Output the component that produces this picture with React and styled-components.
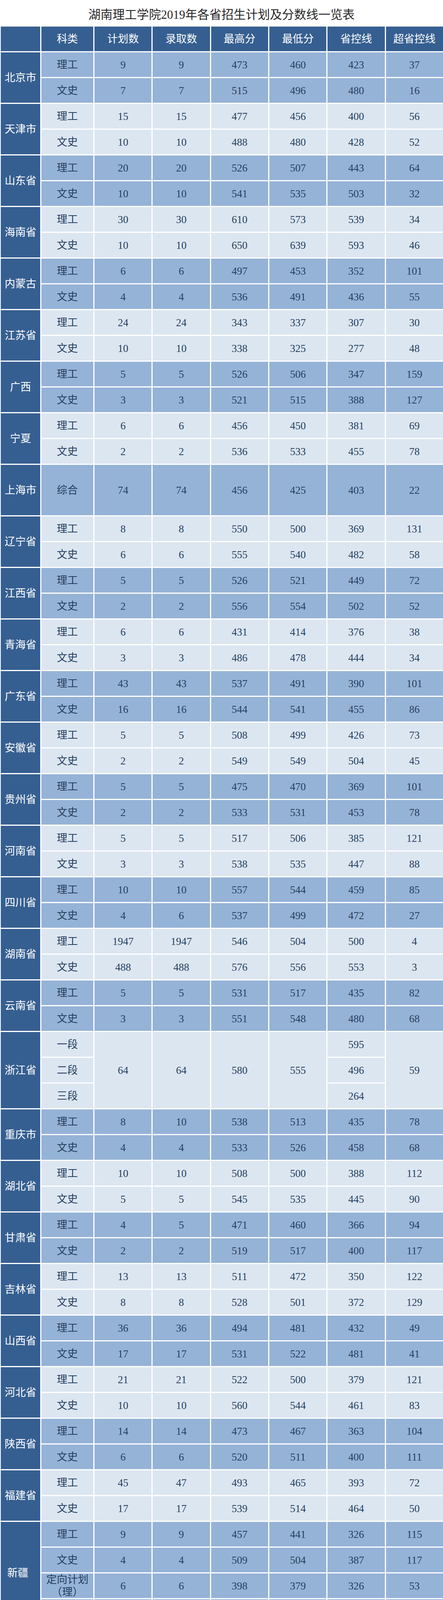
import React from 'react';
import styled, { createGlobalStyle } from 'styled-components';

const GlobalStyle = createGlobalStyle`
  html, body {
    margin: 0;
    padding: 0;
    background: #ffffff;
  }
  body {
    font-family: 'Liberation Serif', 'Noto Sans CJK SC', serif;
  }
`;

const Page = styled.div`
  width: 1135px;
  display: flex;
  flex-direction: column;
`;

const TitleBar = styled.div`
  height: 68px;
  display: flex;
  align-items: center;
  justify-content: center;
`;

const Title = styled.h1`
  margin: 0;
  font-size: 31px;
  font-weight: normal;
  color: #262626;
  font-family: 'Liberation Serif', 'Noto Sans CJK SC', serif;
`;

const Grid = styled.div`
  display: grid;
  grid-template-columns: 101px 133px repeat(6, minmax(0, 1fr));
  grid-auto-rows: 63px;
  gap: 3px;
  padding-left: 2px;
`;

const tones = {
  head: '#365f91',
  blue: '#95b3d7',
  pale: '#dce6f1',
};

const Cell = styled.div`
  grid-row: span ${(p) => p.$span || 1};
  background: ${(p) => tones[p.$tone]};
  color: ${(p) => (p.$tone === 'head' ? '#ffffff' : '#243f60')};
  display: flex;
  align-items: center;
  justify-content: center;
  text-align: center;
  font-size: ${(p) => p.$size || 27}px;
  line-height: ${(p) => (p.$multi ? '32px' : '1.25')};
  white-space: nowrap;
  overflow: hidden;
  padding-right: ${(p) => p.$shift || 0}px;
  padding-top: ${(p) => (p.$multi ? 0 : 3)}px;
  box-sizing: border-box;
`;

const headers = ['', '科类', '计划数', '录取数', '最高分', '最低分', '省控线', '超省控线'];

// each row: [科类, 计划数, 录取数, 最高分, 最低分, 省控线, 超省控线]
const groups = [
  { name: '北京市', rows: [['理工', 9, 9, 473, 460, 423, 37], ['文史', 7, 7, 515, 496, 480, 16]] },
  { name: '天津市', rows: [['理工', 15, 15, 477, 456, 400, 56], ['文史', 10, 10, 488, 480, 428, 52]] },
  { name: '山东省', rows: [['理工', 20, 20, 526, 507, 443, 64], ['文史', 10, 10, 541, 535, 503, 32]] },
  { name: '海南省', rows: [['理工', 30, 30, 610, 573, 539, 34], ['文史', 10, 10, 650, 639, 593, 46]] },
  { name: '内蒙古', rows: [['理工', 6, 6, 497, 453, 352, 101], ['文史', 4, 4, 536, 491, 436, 55]] },
  { name: '江苏省', rows: [['理工', 24, 24, 343, 337, 307, 30], ['文史', 10, 10, 338, 325, 277, 48]] },
  { name: '广西', rows: [['理工', 5, 5, 526, 506, 347, 159], ['文史', 3, 3, 521, 515, 388, 127]] },
  { name: '宁夏', rows: [['理工', 6, 6, 456, 450, 381, 69], ['文史', 2, 2, 536, 533, 455, 78]] },
  { name: '上海市', span: 2, rows: [['综合', 74, 74, 456, 425, 403, 22].map((v) => ({ v, span: 2 }))] },
  { name: '辽宁省', rows: [['理工', 8, 8, 550, 500, 369, 131], ['文史', 6, 6, 555, 540, 482, 58]] },
  { name: '江西省', rows: [['理工', 5, 5, 526, 521, 449, 72], ['文史', 2, 2, 556, 554, 502, 52]] },
  { name: '青海省', rows: [['理工', 6, 6, 431, 414, 376, 38], ['文史', 3, 3, 486, 478, 444, 34]] },
  { name: '广东省', rows: [['理工', 43, 43, 537, 491, 390, 101], ['文史', 16, 16, 544, 541, 455, 86]] },
  { name: '安徽省', rows: [['理工', 5, 5, 508, 499, 426, 73], ['文史', 2, 2, 549, 549, 504, 45]] },
  { name: '贵州省', rows: [['理工', 5, 5, 475, 470, 369, 101], ['文史', 2, 2, 533, 531, 453, 78]] },
  { name: '河南省', rows: [['理工', 5, 5, 517, 506, 385, 121], ['文史', 3, 3, 538, 535, 447, 88]] },
  { name: '四川省', rows: [['理工', 10, 10, 557, 544, 459, 85], ['文史', 4, 6, 537, 499, 472, 27]] },
  { name: '湖南省', rows: [['理工', 1947, 1947, 546, 504, 500, 4], ['文史', 488, 488, 576, 556, 553, 3]] },
  { name: '云南省', rows: [['理工', 5, 5, 531, 517, 435, 82], ['文史', 3, 3, 551, 548, 480, 68]] },
  {
    name: '浙江省',
    rows: [
      ['一段', { v: 64, span: 3 }, { v: 64, span: 3 }, { v: 580, span: 3 }, { v: 555, span: 3 }, 595, { v: 59, span: 3 }],
      ['二段', 496],
      ['三段', 264],
    ],
  },
  { name: '重庆市', rows: [['理工', 8, 10, 538, 513, 435, 78], ['文史', 4, 4, 533, 526, 458, 68]] },
  { name: '湖北省', rows: [['理工', 10, 10, 508, 500, 388, 112], ['文史', 5, 5, 545, 535, 445, 90]] },
  { name: '甘肃省', rows: [['理工', 4, 5, 471, 460, 366, 94], ['文史', 2, 2, 519, 517, 400, 117]] },
  { name: '吉林省', rows: [['理工', 13, 13, 511, 472, 350, 122], ['文史', 8, 8, 528, 501, 372, 129]] },
  { name: '山西省', rows: [['理工', 36, 36, 494, 481, 432, 49], ['文史', 17, 17, 531, 522, 481, 41]] },
  { name: '河北省', rows: [['理工', 21, 21, 522, 500, 379, 121], ['文史', 10, 10, 560, 544, 461, 83]] },
  { name: '陕西省', rows: [['理工', 14, 14, 473, 467, 363, 104], ['文史', 6, 6, 520, 511, 400, 111]] },
  { name: '福建省', rows: [['理工', 45, 47, 493, 465, 393, 72], ['文史', 17, 17, 539, 514, 464, 50]] },
  {
    name: '新疆',
    shift: 14,
    rows: [
      ['理工', 9, 9, 457, 441, 326, 115],
      ['文史', 4, 4, 509, 504, 387, 117],
      [{ v: '定向计划|（理）', multi: true }, 6, 6, 398, 379, 326, 53],
      [{ v: '定向计划|（文）', multi: true }, 5, 5, 453, 402, 387, 15],
    ],
  },
  { name: '西藏', rows: [['理工', 3, 5, 363, 343, 425, '-82'], ['文史', 2, 2, 422, 370, 420, '-50']] },
  { name: '黑龙江省', size: 24, rows: [['理工', 5, 5, 479, 464, 372, 92], ['文史', 2, 2, 480, 472, 424, 48]] },
];

const renderText = (v) => {
  const text = String(v);
  if (!text.includes('|')) return text;
  const [a, b] = text.split('|');
  return (
    <span>
      {a}
      <br />
      {b}
    </span>
  );
};

export default function App() {
  return (
    <Page>
      <GlobalStyle />
      <TitleBar>
        <Title>湖南理工学院2019年各省招生计划及分数线一览表</Title>
      </TitleBar>
      <Grid>
        {headers.map((h, i) => (
          <Cell key={'h' + i} $tone="head">{h}</Cell>
        ))}
        {groups.map((g, gi) => {
          const tone = gi % 2 === 0 ? 'blue' : 'pale';
          const span = g.span || g.rows.length;
          const cells = [
            <Cell key={g.name} $tone="head" $span={span} $size={g.size} $shift={g.shift}>
              {g.name}
            </Cell>,
          ];
          g.rows.forEach((row, ri) => {
            row.forEach((c, ci) => {
              const item = typeof c === 'object' ? c : { v: c };
              cells.push(
                <Cell key={`${g.name}-${ri}-${ci}`} $tone={tone} $span={item.span} $multi={item.multi}>
                  {renderText(item.v)}
                </Cell>
              );
            });
          });
          return cells;
        })}
      </Grid>
    </Page>
  );
}
